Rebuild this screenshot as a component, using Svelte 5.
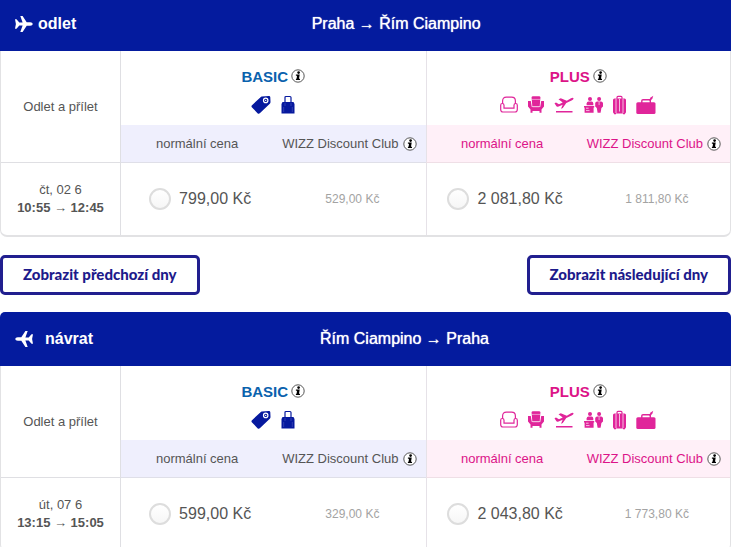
<script>
	let selectedFares = $state({});

	const flights = [
		{
			id: 'outbound',
			title: 'odlet',
			route: 'Praha → Řím Ciampino',
			date: 'čt, 02 6',
			time: '10:55 → 12:45',
			basic: { price: '799,00 Kč', club: '529,00 Kč' },
			plus: { price: '2 081,80 Kč', club: '1 811,80 Kč' }
		},
		{
			id: 'return',
			title: 'návrat',
			route: 'Řím Ciampino → Praha',
			date: 'út, 07 6',
			time: '13:15 → 15:05',
			basic: { price: '599,00 Kč', club: '329,00 Kč' },
			plus: { price: '2 043,80 Kč', club: '1 773,80 Kč' }
		}
	];
</script>

{#snippet info(label)}
	<button class="info" type="button" aria-label={label}>
		<svg width="14" height="14" viewBox="0 0 14 14">
			<circle cx="7" cy="7" r="6.2" fill="#fff" stroke="#444" stroke-width="0.9" />
			<circle cx="7.6" cy="3.6" r="1.3" fill="#000" />
			<path d="M4.9 5.4H8.7L8 9.7H9V11H4.9V9.7H5.6L6 6.7H4.9Z" fill="#000" />
		</svg>
	</button>
{/snippet}

{#snippet plane(back)}
	<svg class:back width="18" height="18" viewBox="0 0 18 18" fill="#fff">
		<path
			d="M0 4.2H1.5L4.3 7.4H7.6L5.3 1H7.6L11.7 7.2H15.2Q17.6 7.4 17.8 9Q17.6 10.6 15.2 10.8H11.7L7.6 17H5.3L7.6 10.6H4.3L1.5 13.8H0L.9 9Z"
		/>
	</svg>
{/snippet}

{#snippet basicIcons()}
	<!-- price tag -->
	<svg width="20" height="20" viewBox="0 0 20 20">
		<path
			d="M10.8 1.6L18 1Q19.2 1 19.3 2.2L19.5 7Q19.5 8 18.8 8.7L8.8 18.3Q7.6 19.3 6.5 18.2L.8 12.2Q0 11.2 1 10.2L9.3 2.4Q10 1.7 10.8 1.6Z"
			fill="#06199e"
		/>
		<circle cx="14.7" cy="5.4" r="2.2" fill="#06199e" stroke="#fff" stroke-width="1.2" />
		<circle cx="14.7" cy="5.4" r="0.7" fill="#fff" />
	</svg>
	<!-- hand bag -->
	<svg width="14" height="20" viewBox="0 0 14 20">
		<path d="M4 10V2.6Q4 1.5 5 1.5H9Q10 1.5 10 2.6V10" fill="none" stroke="#06199e" stroke-width="1.2" />
		<path d="M1.5 7H12.5L13.5 9V18.5H.5V9Z" fill="#06199e" />
		<path d="M4 8V11M10 8V11M2.7 12V17M11.3 12V17" stroke="#4b58bd" stroke-width="0.6" />
	</svg>
{/snippet}

{#snippet plusIcons()}
	<!-- wide seat -->
	<svg width="18" height="20" viewBox="0 0 18 20" fill="none" stroke="#e0259a" stroke-width="1.2">
		<path d="M2.6 8.5V6Q2.6 2.2 6.4 2.2H11.6Q15.4 2.2 15.4 6V8.5" />
		<path
			d="M4 13.2V10.3Q4 8.5 2.3 8.5Q.7 8.5 .7 10.2V14.5Q.7 17 3 17H15Q17.3 17 17.3 14.5V10.2Q17.3 8.5 15.7 8.5Q14 8.5 14 10.3V13.2Z"
		/>
	</svg>
	<!-- armchair -->
	<svg width="16" height="20" viewBox="0 0 16 20" fill="#e0259a">
		<path d="M5 1.2H11Q12.4 1.2 12.4 2.6L11.7 11.5H4.3L3.6 2.6Q3.6 1.2 5 1.2Z" />
		<path
			d="M0 6H2.8L3.8 12H12.2L13.2 6H16V11.5L13.5 14.5V17.8H11.5V16H4.5V17.8H2.5V14.5L0 11.5Z"
		/>
		<path d="M3.8 4.4H12.2M4.6 11.8H11.4" stroke="#fff" stroke-width="0.5" />
	</svg>
	<!-- plane taking off -->
	<svg width="20" height="20" viewBox="0 0 20 20" fill="#e0259a">
		<path
			d="M.5 8.2L2 7.5L5 9.2L8.7 7.4L4.5 4.2L6.8 3.3L12.8 5.7L17 3.3Q18.8 2.4 19.6 3.3Q19.6 4.5 17.6 5.5L12.3 8.1L8.8 13L7 13.8L8.7 9.8L4.6 11.5Q3 12 2.4 11.3Z"
		/>
		<path d="M2 16H18.5V17.4H2Z" />
	</svg>
	<!-- check-in desk -->
	<svg width="19" height="20" viewBox="0 0 19 20" fill="#e0259a">
		<circle cx="6" cy="4.1" r="2" />
		<path d="M2.6 10.3V8.4Q2.8 6.6 4.5 6.6H7.6Q9.2 6.8 9.3 8.5V10.3Z" />
		<path d="M0 10.9H10.2V12.4H9.6V17.7H.6V12.4H0Z" />
		<path d="M2 13.2H4.6M2 15.6H5.5" stroke="#fff" stroke-width="0.7" />
		<circle cx="15.1" cy="4.1" r="2" />
		<path
			d="M13.1 6.6H17.1Q18.8 6.7 19 8.2V11.5L17.4 13L16.6 17.7H13.6L12.8 13L11.2 11.5V8.2Q11.4 6.7 13.1 6.6Z"
		/>
		<path d="M15.1 7V10" stroke="#fff" stroke-width="0.6" />
	</svg>
	<!-- suitcase -->
	<svg width="13" height="20" viewBox="0 0 13 20">
		<path d="M4 5V2.4Q4 1.3 5 1.3H8Q9 1.3 9 2.4V5" fill="none" stroke="#e0259a" stroke-width="1.2" />
		<rect x="0" y="3.4" width="13" height="15.2" rx="1.5" fill="#e0259a" />
		<path d="M3 3.6V18.4M6.5 4V16.5M10 3.6V18.4" stroke="#fff" stroke-width="0.7" />
		<path d="M1 18H3V19.3H1ZM10 18H12V19.3H10Z" fill="#e0259a" />
	</svg>
	<!-- checked baggage -->
	<svg width="20" height="20" viewBox="0 0 20 20">
		<path d="M5.8 8V5.8Q5.8 4.8 7 4.8H14.3V8" fill="none" stroke="#e0259a" stroke-width="1.4" />
		<path d="M13 5.2L14.6 2.4L17.3 .7L16.5 3.2L14.5 6Z" fill="#e0259a" />
		<rect x="0.3" y="7.3" width="19.2" height="11.7" rx="1.5" fill="#e0259a" />
	</svg>
{/snippet}

{#snippet fare(flight, kind)}
	<td class="price {kind}">
		<label>
			<input
				type="radio"
				name={flight.id}
				value={kind}
				bind:group={selectedFares[flight.id]}
			/>
			{flight[kind].price}
		</label>
	</td>
	<td class="club-price">{flight[kind].club}</td>
{/snippet}

<main>
	{#each flights as flight, i}
		<section>
			<header>
				<h2 class:returning={i === 1}>{@render plane(i === 1)}{flight.title}</h2>
				<span class="route">{flight.route}</span>
			</header>
			<div class="fares">
				<table>
					<colgroup>
						<col class="time-col" />
						<col span="4" />
					</colgroup>
					<thead>
						<tr>
							<th class="time" rowspan="2">Odlet a přílet</th>
							<th class="bundle basic" colspan="2">
								<div class="name">BASIC {@render info('BASIC')}</div>
								<div class="services">{@render basicIcons()}</div>
							</th>
							<th class="bundle plus" colspan="2">
								<div class="name">PLUS {@render info('PLUS')}</div>
								<div class="services">{@render plusIcons()}</div>
							</th>
						</tr>
						<tr class="kinds">
							{#each ['basic', 'plus'] as kind}
								<th class={kind}>normální cena</th>
								<th class="{kind} club">
									<div>WIZZ Discount Club {@render info('WIZZ Discount Club')}</div>
								</th>
							{/each}
						</tr>
					</thead>
					<tbody>
						<tr>
							<td class="time">{flight.date}<br /><strong>{flight.time}</strong></td>
							{@render fare(flight, 'basic')}
							{@render fare(flight, 'plus')}
						</tr>
					</tbody>
				</table>
			</div>
		</section>
		{#if i === 0}
			<nav>
				<button type="button">Zobrazit předchozí dny</button>
				<button type="button">Zobrazit následující dny</button>
			</nav>
		{/if}
	{/each}
</main>

<style>
	:global(body) {
		background: #fff;
	}

	main {
		font-family: 'Liberation Sans', Arial, sans-serif;
		font-size: 13px;
		color: #555;
	}

	header {
		display: flex;
		align-items: center;
		box-sizing: border-box;
		height: 54px;
		padding: 0 15px;
		background: #041b9e;
		color: #fff;
		font-size: 16px;
		border-radius: 5px 5px 0 0;
	}

	section:first-child header {
		height: 51px;
		padding-bottom: 4px;
		border-radius: 0;
	}

	h2 {
		display: flex;
		align-items: center;
		gap: 5px;
		margin: 0;
		font-size: 16px;
	}

	h2.returning {
		gap: 12px;
	}

	.back {
		transform: scaleX(-1);
	}

	.route {
		flex: 1;
		text-align: center;
		text-shadow: 0 0 1px #fff;
	}

	.fares {
		border: 1px solid #e2e2e4;
		border-width: 0 1px 2px;
		border-radius: 0 0 7px 7px;
		overflow: hidden;
	}

	table {
		width: 100%;
		table-layout: fixed;
		border-collapse: separate;
		border-spacing: 0;
	}

	.time-col {
		width: 120px;
	}

	th,
	td {
		padding: 0;
		font-weight: normal;
		text-align: center;
		vertical-align: middle;
	}

	.time {
		box-sizing: border-box;
		border-right: 1px solid #dfdfe3;
		line-height: 18px;
	}

	th.time {
		border-bottom: 1px solid #dfdfe3;
	}

	.bundle {
		height: 74px;
		box-sizing: border-box;
		padding: 15px 0 10px;
	}

	.name {
		display: flex;
		justify-content: center;
		align-items: center;
		gap: 3px;
		height: 20px;
		font-size: 15px;
		font-weight: bold;
	}

	.basic .name {
		color: #0a62ad;
	}

	.plus .name {
		color: #dc1488;
	}

	.services {
		display: flex;
		justify-content: center;
		gap: 10px;
		margin-top: 9px;
	}

	.info {
		display: block;
		padding: 0;
		border: none;
		background: none;
		cursor: pointer;
	}

	svg {
		display: block;
	}

	.plus {
		border-left: 1px solid #e6e2e8;
	}

	.kinds th {
		box-sizing: border-box;
		height: 38px;
		border-bottom: 1px solid #dfdfe8;
		background: #efeffd;
	}

	.kinds .plus {
		border-bottom-color: #efdfe6;
		background: #fff0f8;
		color: #dc1488;
	}

	.kinds .plus.club {
		border-left: none;
	}

	.club div {
		display: flex;
		justify-content: center;
		align-items: center;
		gap: 4px;
	}

	.price,
	.club-price {
		height: 72px;
		padding-left: 6px;
	}

	.price label {
		display: flex;
		justify-content: center;
		align-items: center;
		gap: 8px;
		font-size: 16px;
		white-space: nowrap;
		cursor: pointer;
	}

	.price input {
		appearance: none;
		box-sizing: border-box;
		width: 22px;
		height: 22px;
		margin: 0;
		border: 2px solid #ddd;
		border-radius: 50%;
		background: linear-gradient(#fff, #f6f6f6);
		cursor: pointer;
	}

	.price input:checked {
		background: radial-gradient(#041b9e 5px, #fff 6px);
	}

	.club-price {
		font-size: 12px;
		color: #a3a3a3;
	}

	nav {
		display: flex;
		justify-content: space-between;
		padding: 18px 0 17px;
	}

	nav button {
		height: 40px;
		padding: 0 20px 2px;
		border: 3px solid #211f8f;
		border-radius: 5px;
		background: #fff;
		color: #1d1a8b;
		font-family: Lato, sans-serif;
		font-size: 15px;
		font-weight: 900;
		cursor: pointer;
	}
</style>
